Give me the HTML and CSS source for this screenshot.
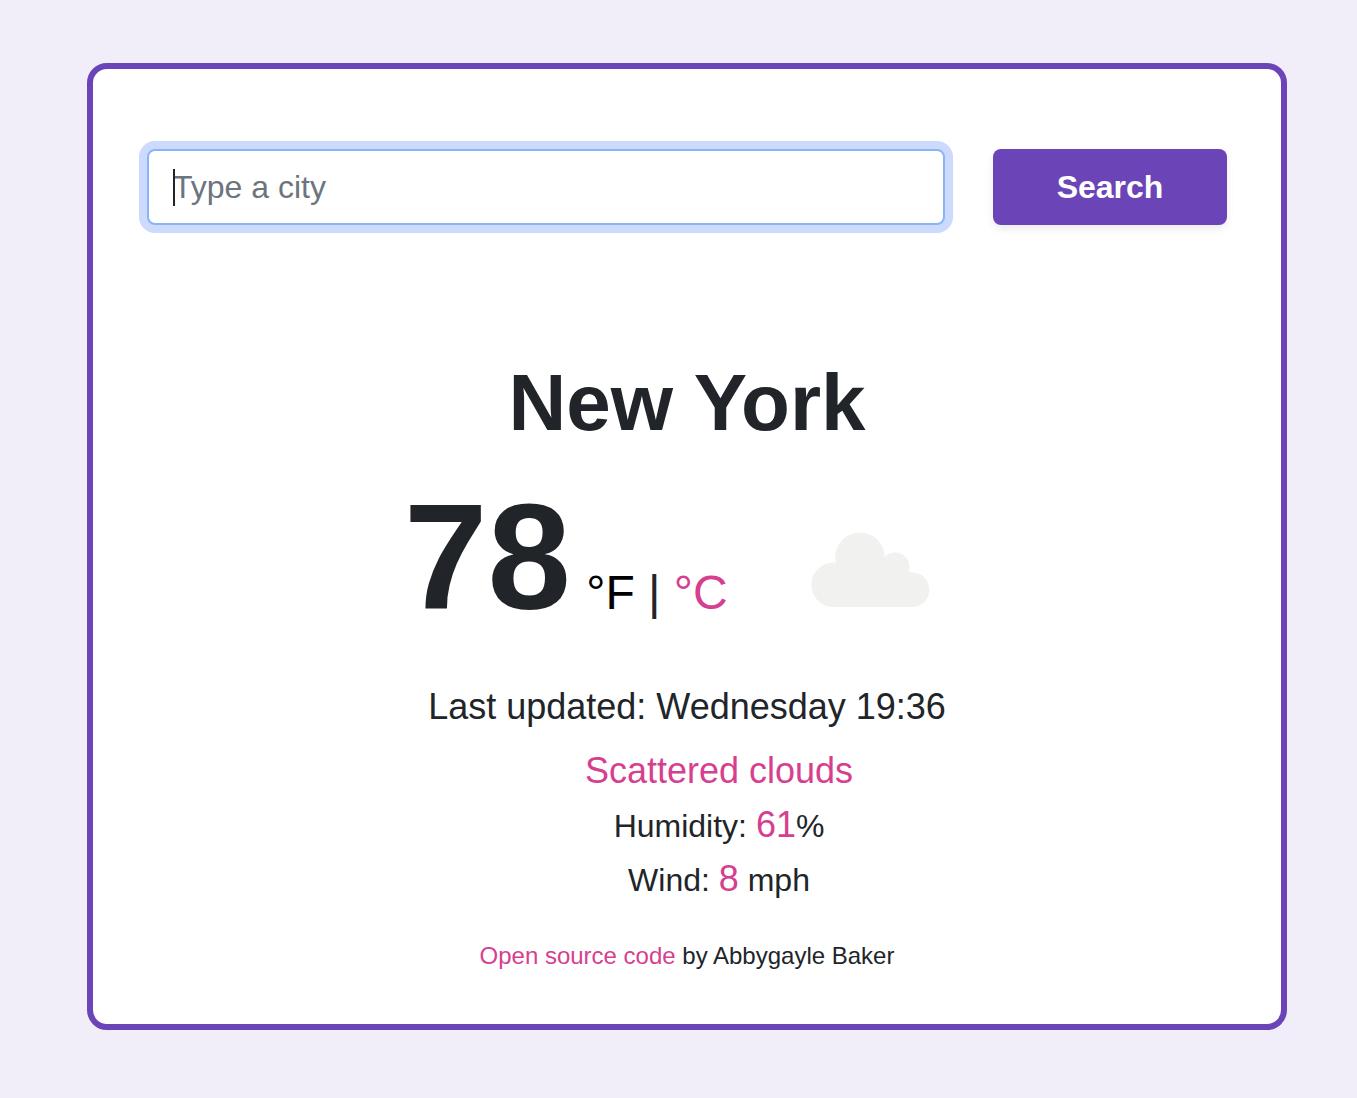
FILE: index.html
```html
<!DOCTYPE html>
<html lang="en">
<head>
<meta charset="utf-8">
<meta name="viewport" content="width=device-width, initial-scale=1">
<title>Weather</title>
<link rel="stylesheet" href="styles.css">
</head>
<body>
<main class="card">
  <form class="search">
    <div class="search-field">
      <input class="search-input" type="text" placeholder="Type a city" aria-label="City" autocomplete="off">
      <span class="caret" aria-hidden="true"></span>
    </div>
    <button class="search-button" type="submit">Search</button>
  </form>
  <h1 class="city">New York</h1>
  <div class="current">
    <div class="temperature">
      <strong class="degrees">78</strong>
      <span class="units"><a class="unit-active" href="#">°F</a> | <a href="#">°C</a></span>
    </div>
    <svg class="weather-icon" viewBox="0 0 200 200" role="img" aria-label="Scattered clouds">
      <g fill="#f1f1ef">
        <circle cx="90" cy="87.5" r="24.8"/>
        <circle cx="63.6" cy="114.8" r="22.3"/>
        <circle cx="125.3" cy="96.8" r="14.2"/>
        <circle cx="142" cy="119.8" r="17.3"/>
        <path d="M63 137.1V104L90 90L115 87L139 100L143 110V137.1Z"/>
      </g>
    </svg>
  </div>
  <p class="updated">Last updated: Wednesday 19:36</p>
  <ul class="details">
    <li><span class="value">Scattered clouds</span></li>
    <li>Humidity: <span class="value">61</span>%</li>
    <li>Wind: <span class="value">8</span> mph</li>
  </ul>
  <footer class="credit"><a href="#">Open source code</a> by Abbygayle Baker</footer>
</main>
</body>
</html>
```
FILE: styles.css
```css
* {
  box-sizing: border-box;
}

body {
  margin: 0;
  padding: 63px 70px 68px 87px;
  background: #f1eef9;
  color: #212529;
  font-family: "Liberation Sans", Arial, sans-serif;
  font-size: 32px;
}

a {
  color: #d63f8f;
  text-decoration: none;
}

.card {
  padding: 80px 54px 50px;
  border: 6px solid #6b44b8;
  border-radius: 20px;
  background: #fff;
  text-align: center;
}

.search {
  display: grid;
  grid-template-columns: repeat(12, 1fr);
  gap: 48px;
}

.search-field {
  position: relative;
  grid-column: span 9;
}

.search-input {
  display: block;
  width: 100%;
  height: 76px;
  padding: 12px 24px;
  border: 2px solid #8bb4f8;
  border-radius: 8px;
  outline: none;
  box-shadow: 0 0 0 8px #cbdafd;
  color: inherit;
  font: inherit;
}

.search-input::placeholder {
  color: #6c757d;
  opacity: 1;
}

.caret {
  position: absolute;
  top: 20px;
  left: 26px;
  width: 2px;
  height: 37px;
  background: #212529;
}

.search-button {
  grid-column: span 3;
  height: 76px;
  border: 0;
  border-radius: 8px;
  background: #6b44b8;
  box-shadow: 0 4px 8px rgba(0, 0, 0, 0.08);
  color: #fff;
  font: inherit;
  font-weight: 700;
}

.city {
  margin: 130px 0 19px;
  font-size: 80px;
  line-height: 96px;
}

.current {
  display: flex;
  justify-content: center;
  align-items: flex-start;
}

.temperature {
  width: 366px;
  font-size: 48px;
  line-height: 1;
  text-align: left;
  white-space: nowrap;
}

.degrees {
  margin-right: 2px;
  font-size: 150px;
  line-height: 174px;
}

.unit-active {
  color: #000;
}

.weather-icon {
  width: 200px;
  height: 200px;
}

.updated {
  margin: 10px 0 11px;
  font-size: 36px;
  line-height: 54px;
}

.details {
  margin: 0;
  padding: 0 0 0 64px;
  list-style: none;
  line-height: 54px;
}

.value {
  color: #d63f8f;
  font-size: 36px;
  line-height: 48px;
}

.credit {
  margin-top: 31px;
  font-size: 24px;
  line-height: 36px;
}
```
